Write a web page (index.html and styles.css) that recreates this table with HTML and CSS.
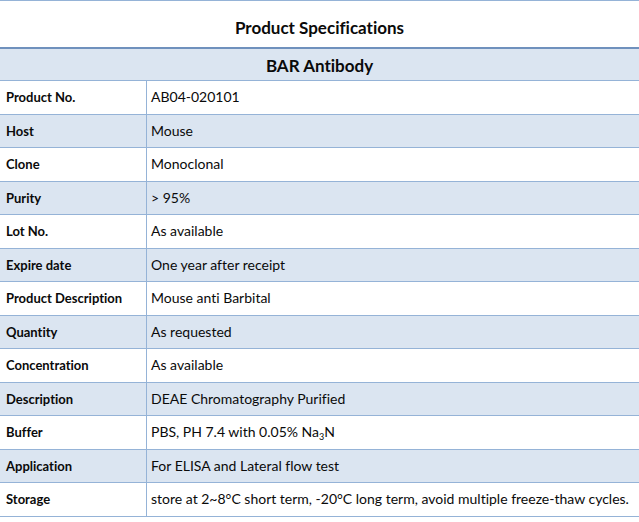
FILE: index.html
```html
<!DOCTYPE html>
<html>
<head>
<meta charset="utf-8">
<link rel="stylesheet" href="styles.css">
</head>
<body>
<div class="sheet">
  <div class="title">Product Specifications</div>
  <div class="band">BAR Antibody</div>
  <div class="rows">
    <div class="row"><div class="label">Product No.</div><div class="value">AB04-020101</div></div>
    <div class="row alt"><div class="label">Host</div><div class="value">Mouse</div></div>
    <div class="row"><div class="label">Clone</div><div class="value">Monoclonal</div></div>
    <div class="row alt"><div class="label">Purity</div><div class="value">&gt; 95%</div></div>
    <div class="row"><div class="label">Lot No.</div><div class="value">As available</div></div>
    <div class="row alt"><div class="label">Expire date</div><div class="value">One year after receipt</div></div>
    <div class="row"><div class="label">Product Description</div><div class="value">Mouse anti Barbital</div></div>
    <div class="row alt"><div class="label">Quantity</div><div class="value">As requested</div></div>
    <div class="row"><div class="label">Concentration</div><div class="value">As available</div></div>
    <div class="row alt"><div class="label">Description</div><div class="value">DEAE Chromatography Purified</div></div>
    <div class="row"><div class="label">Buffer</div><div class="value">PBS, PH 7.4 with 0.05% Na<sub>3</sub>N</div></div>
    <div class="row alt"><div class="label">Application</div><div class="value">For ELISA and Lateral flow test</div></div>
    <div class="row"><div class="label">Storage</div><div class="value">store at 2~8°C short term, -20°C long term, avoid multiple freeze-thaw cycles.</div></div>
  </div>
</div>
</body>
</html>
```

FILE: styles.css
```css
html, body {
  margin: 0;
  padding: 0;
  background: #ffffff;
}
body {
  font-family: Lato, "Open Sans", sans-serif;
  font-variant-ligatures: none;
  color: #0a0a0a;
  width: 639px;
}
.sheet {
  border-top: 1px solid #95b3d7;
}
.title {
  height: 48px;
  box-sizing: border-box;
  padding-top: 6px;
  display: flex;
  align-items: center;
  justify-content: center;
  font-weight: bold;
  font-size: 17px;
  border-bottom: 2px solid #6f91bd;
}
.band {
  height: 32px;
  box-sizing: border-box;
  padding-top: 1px;
  display: flex;
  align-items: center;
  justify-content: center;
  font-weight: bold;
  font-size: 17px;
  background: #dbe5f1;
  border-bottom: 1px solid #95b3d7;
}
.row {
  display: grid;
  grid-template-columns: 147px 1fr;
  height: 33.5px;
  box-sizing: border-box;
  border-bottom: 1px solid #95b3d7;
  font-size: 13px;
}
.row.alt {
  background: #dbe5f1;
}
.label {
  font-weight: bold;
  padding-left: 6px;
  display: flex;
  align-items: center;
  border-right: 1px solid #95b3d7;
}
.value {
  padding-left: 4px;
  line-height: 32.5px;
  white-space: nowrap;
  font-size: 14px;
}
.value sub {
  font-size: 9px;
  vertical-align: -3px;
  line-height: 0;
}
```
